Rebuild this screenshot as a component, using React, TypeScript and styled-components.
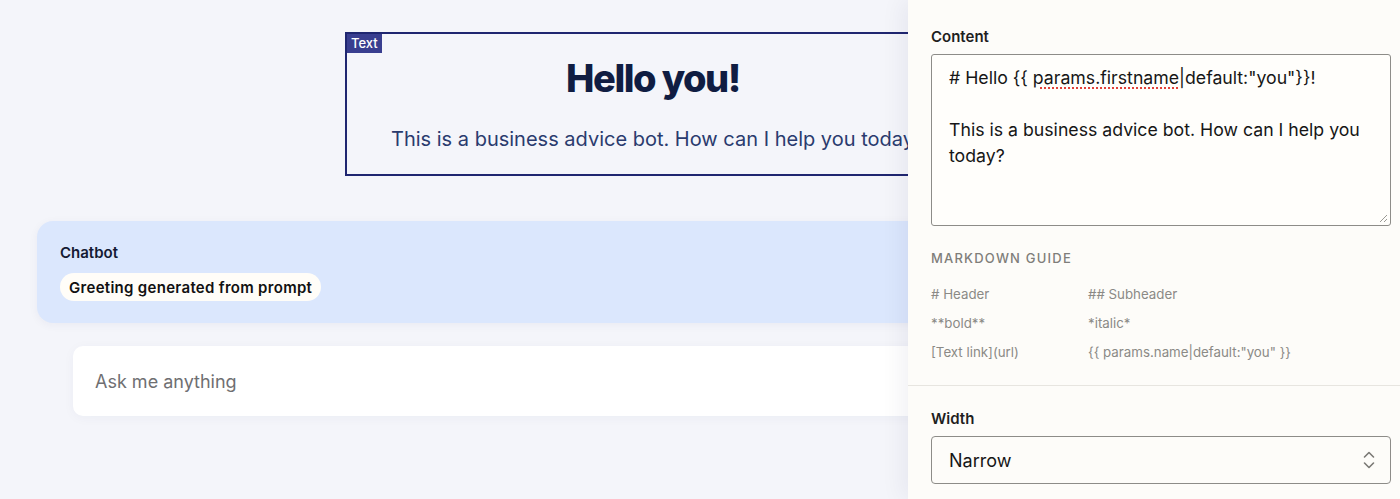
import styled, { createGlobalStyle } from "styled-components";

const GlobalStyle = createGlobalStyle`
  html, body {
    margin: 0;
    padding: 0;
    height: 499px;
    overflow: hidden;
    background: #f4f5fa;
    font-family: Inter, "Noto Sans", sans-serif;
  }
  * { box-sizing: border-box; }
`;

const Page = styled.div`
  position: relative;
  width: 1400px;
  height: 499px;
  overflow: hidden;
  background: #f4f5fa;
`;

const Canvas = styled.main`
  width: 1232px;
  margin-left: 37px;
  padding-top: 32px;
  display: flex;
  flex-direction: column;
`;

const TextBlock = styled.section`
  position: relative;
  width: 616px;
  height: 144px;
  align-self: center;
  border: 2px solid #1f2670;
  padding: 21px 40px 0;
  text-align: center;
`;

const BlockTag = styled.span`
  position: absolute;
  top: 0;
  left: 0;
  background: #393e8f;
  color: #fff;
  font-size: 13px;
  font-weight: 500;
  line-height: 19px;
  padding: 0 4px 0 4px;
`;

const Heading = styled.h1`
  margin: 0;
  font-size: 38px;
  font-weight: 800;
  letter-spacing: -1.5px;
  line-height: 46px;
  color: #101d42;
`;

const Subtitle = styled.p`
  margin: 25px 0 0;
  font-size: 20px;
  line-height: 26px;
  color: #2a3b6e;
  white-space: nowrap;
  padding-left: 4px;
`;

const ChatCard = styled.section`
  margin-top: 45px;
  height: 102px;
  background: #dbe7fd;
  border-radius: 16px;
  box-shadow: 0 2px 10px rgba(30, 40, 90, 0.05);
  padding: 22px 23px;
  display: flex;
  flex-direction: column;
  align-items: flex-start;
  gap: 10px;
`;

const ChatTitle = styled.div`
  font-size: 15px;
  font-weight: 600;
  line-height: 20px;
  color: #141a33;
`;

const Pill = styled.span`
  background: #fffdf8;
  border-radius: 15px;
  padding: 0 9px;
  height: 29px;
  display: flex;
  align-items: center;
  font-size: 15px;
  font-weight: 600;
  letter-spacing: 0.3px;
  color: #111;
`;

const AskBox = styled.div`
  margin: 23px 36px 0;
  height: 70px;
  background: #fff;
  border-radius: 10px;
  box-shadow: 0 2px 12px rgba(30, 40, 90, 0.04);
  display: flex;
  align-items: center;
  padding: 0 22px;
  font-size: 18px;
  color: #6f6f72;
`;

const Panel = styled.aside`
  position: absolute;
  top: 0;
  right: 0;
  bottom: 0;
  width: 492px;
  background: #fdfcf9;
  box-shadow: -6px 0 22px rgba(20, 25, 60, 0.06);
  display: flex;
  flex-direction: column;
`;

const PanelSection = styled.div<{ $top: number; $bottom: number }>`
  padding: ${(p) => p.$top}px 9px ${(p) => p.$bottom}px 23px;
  display: flex;
  flex-direction: column;
`;

const Divider = styled.hr`
  margin: 0;
  border: none;
  border-top: 1px solid #e7e5e0;
`;

const FieldLabel = styled.label`
  font-size: 15px;
  font-weight: 600;
  color: #1f1f1f;
  line-height: 20px;
  margin-bottom: 7px;
`;

const TextArea = styled.div`
  position: relative;
  height: 172px;
  border: 1px solid #8d8c88;
  border-radius: 3px;
  background: #fffefb;
  padding: 10px 17px;
  font-size: 17.7px;
  line-height: 26px;
  color: #161616;
`;

const Spelling = styled.span`
  text-decoration: underline dotted #e0403a;
  text-underline-offset: 3px;
  text-decoration-thickness: 1.5px;
`;

const ResizeHandle = styled.svg`
  position: absolute;
  right: 2px;
  bottom: 2px;
`;

const GuideTitle = styled.div`
  font-size: 13px;
  font-weight: 500;
  letter-spacing: 1.2px;
  color: #7f7e7a;
  line-height: 16px;
  margin-bottom: 19px;
`;

const GuideGrid = styled.div`
  display: grid;
  grid-template-columns: 157px 1fr;
  row-gap: 11px;
  font-size: 13.3px;
  line-height: 18px;
  color: #8b8a86;
`;

const Select = styled.div`
  height: 48px;
  border: 1px solid #8d8c88;
  border-radius: 4px;
  display: flex;
  align-items: center;
  justify-content: space-between;
  padding: 0 14px 0 17px;
  font-size: 18px;
  color: #161616;
`;

const guide = [
  "# Header",
  "## Subheader",
  "**bold**",
  "*italic*",
  "[Text link](url)",
  '{{ params.name|default:"you" }}',
];

const App = () => {
  return (
    <Page>
      <GlobalStyle />
      <Canvas>
        <TextBlock>
          <BlockTag>Text</BlockTag>
          <Heading>Hello you!</Heading>
          <Subtitle>
            This is a business advice bot. How can I help you today?
          </Subtitle>
        </TextBlock>

        <ChatCard>
          <ChatTitle>Chatbot</ChatTitle>
          <Pill>Greeting generated from prompt</Pill>
        </ChatCard>

        <AskBox>Ask me anything</AskBox>
      </Canvas>

      <Panel>
        <PanelSection $top={27} $bottom={24}>
          <FieldLabel>Content</FieldLabel>
          <TextArea>
            # Hello {"{{ "}
            <Spelling>params.firstname</Spelling>|default:"you"{"}}"}!
            <br />
            <br />
            This is a business advice bot. How can I help you today?
            <ResizeHandle width="10" height="10" viewBox="0 0 10 10">
              <path
                d="M9 2 L2 9 M9 6 L6 9"
                stroke="#9a9994"
                strokeWidth="1"
                fill="none"
              />
            </ResizeHandle>
          </TextArea>
        </PanelSection>

        <PanelSection $top={0} $bottom={24}>
          <GuideTitle>MARKDOWN GUIDE</GuideTitle>
          <GuideGrid>
            {guide.map((item) => (
              <span key={item}>{item}</span>
            ))}
          </GuideGrid>
        </PanelSection>

        <Divider />

        <PanelSection $top={23} $bottom={16}>
          <FieldLabel>Width</FieldLabel>
          <Select>
            <span>Narrow</span>
            <svg width="14" height="20" viewBox="0 0 14 20">
              <path
                d="M2.5 7 L7 2.5 L11.5 7 M2.5 13 L7 17.5 L11.5 13"
                stroke="#7a7975"
                strokeWidth="1.6"
                fill="none"
                strokeLinecap="round"
                strokeLinejoin="round"
              />
            </svg>
          </Select>
        </PanelSection>
      </Panel>
    </Page>
  );
};

export default App;
